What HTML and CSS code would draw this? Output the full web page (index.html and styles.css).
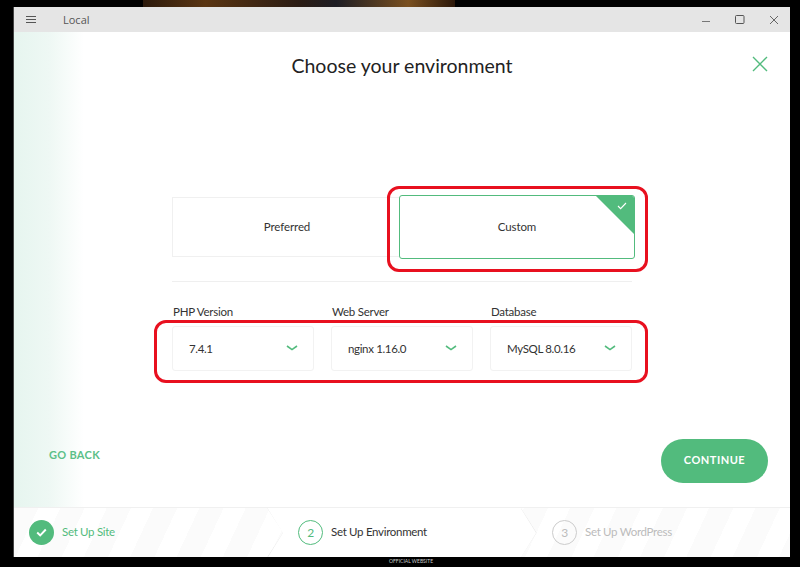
FILE: index.html
```html
<!DOCTYPE html>
<html lang="en">
<head>
<meta charset="utf-8">
<title>Local</title>
<link rel="stylesheet" href="styles.css">
</head>
<body>
<div class="photo-strip"></div>
<div class="window">
  <header class="titlebar">
    <div class="titlebar-left">
      <svg class="hamburger" width="10" height="8" viewBox="0 0 10 8"><path d="M0 .5h10M0 3.5h10M0 6.5h10" stroke="#555" fill="none"/></svg>
      <span class="app-name">Local</span>
    </div>
    <div class="win-controls">
      <svg width="10" height="10" viewBox="0 0 10 10"><path d="M1 6.5h8" stroke="#777" fill="none"/></svg>
      <svg width="10" height="10" viewBox="0 0 10 10"><rect x=".5" y=".5" width="8.5" height="8" rx="1" stroke="#555" fill="none"/></svg>
      <svg width="10" height="10" viewBox="0 0 10 10"><path d="M1 1l8 8M9 1l-8 8" stroke="#666" fill="none"/></svg>
    </div>
  </header>
  <main class="main">
    <div class="heading">
      <span></span>
      <h1 class="title">Choose your environment</h1>
      <svg class="close" width="16" height="16" viewBox="0 0 16 16"><path d="M1 1l14 14M15 1L1 15" stroke="#52bb7d" stroke-width="1.4" fill="none"/></svg>
    </div>
    <div class="panel">
      <div class="choices">
        <div class="choice">Preferred</div>
        <div class="choice choice-active">Custom
          <span class="corner"></span>
          <svg class="corner-check" width="10" height="8" viewBox="0 0 10 8"><path d="M1 4l2.6 2.6L9 1" stroke="#fff" stroke-width="1.1" fill="none"/></svg>
        </div>
      </div>
      <div class="divider"></div>
      <div class="fields">
        <div class="field">
          <div class="field-label">PHP Version</div>
          <div class="select">7.4.1<svg width="12" height="6" viewBox="0 0 12 6"><path d="M1 1l5 3.6L11 1" stroke="#52bb7d" stroke-width="1.6" fill="none"/></svg></div>
        </div>
        <div class="field">
          <div class="field-label">Web Server</div>
          <div class="select">nginx 1.16.0<svg width="12" height="6" viewBox="0 0 12 6"><path d="M1 1l5 3.6L11 1" stroke="#52bb7d" stroke-width="1.6" fill="none"/></svg></div>
        </div>
        <div class="field">
          <div class="field-label">Database</div>
          <div class="select">MySQL 8.0.16<svg width="12" height="6" viewBox="0 0 12 6"><path d="M1 1l5 3.6L11 1" stroke="#52bb7d" stroke-width="1.6" fill="none"/></svg></div>
        </div>
      </div>
    </div>
    <div class="actions">
      <span class="go-back">GO BACK</span>
      <span class="continue">CONTINUE</span>
    </div>
  </main>
  <footer class="steps">
    <div class="step step-done">
      <span class="dot dot-done"><svg width="11" height="9" viewBox="0 0 11 9"><path d="M1.2 4.5l3 3L9.8 1.5" stroke="#fff" stroke-width="1.9" fill="none"/></svg></span>
      <span>Set Up Site</span>
    </div>
    <div class="step step-current">
      <svg class="chevron chevron-left" width="16" height="50" viewBox="0 0 16 50"><path d="M0 0l15.5 25L0 50" stroke="#eee" fill="none"/></svg>
      <span class="dot dot-current">2</span>
      <span>Set Up Environment</span>
      <svg class="chevron chevron-right" width="16" height="50" viewBox="0 0 16 50"><path d="M0 0l15.5 25L0 50" stroke="#eee" fill="none"/></svg>
    </div>
    <div class="step step-next">
      <span class="dot dot-next">3</span>
      <span>Set Up WordPress</span>
    </div>
  </footer>
  <div class="callout callout-custom"></div>
  <div class="callout callout-fields"></div>
</div>
<div class="official">OFFICIAL WEBSITE</div>
</body>
</html>
```

FILE: styles.css
```css
* { box-sizing: border-box; }
html, body { margin: 0; height: 100%; }
body {
  background: #000;
  font-family: Lato, "Open Sans", sans-serif;
  color: #333;
  overflow: hidden;
}
.photo-strip {
  height: 7px;
  width: 312px;
  margin-left: 143px;
  background: linear-gradient(90deg, #2c1a0c, #5a3512 20%, #2b1c14 50%, #1d1d24 62%, #7a5020 85%, #2a1608);
}
.window {
  position: relative;
  width: 776px;
  height: 550px;
  margin-left: 14px;
  display: flex;
  flex-direction: column;
  background: #fff;
  box-shadow: -1px 0 0 #444;
}
.titlebar {
  flex: none;
  height: 25px;
  background: #e5e5e5;
  display: flex;
  align-items: center;
  justify-content: space-between;
}
.titlebar-left { display: flex; align-items: center; padding-left: 12px; }
.hamburger { margin-right: 27px; }
.app-name { font: 11px "Open Sans", sans-serif; color: #555; }
.win-controls { display: flex; gap: 24px; padding-right: 11px; }
.main {
  flex: 1;
  display: flex;
  flex-direction: column;
  background: linear-gradient(90deg, #e6f5ef, #eef8f4 35px, #fff 70px);
}
.heading {
  display: grid;
  grid-template-columns: 1fr auto 1fr;
  align-items: start;
  padding: 20px 22px 0;
}
.title {
  margin: 0;
  font-family: Lato, sans-serif;
  font-size: 19.5px;
  font-weight: 400;
  line-height: 28px;
  color: #222;
}
.close { justify-self: end; margin-top: 4px; }
.panel { width: 460px; margin: 115px 0 0 158px; }
.choices { display: flex; align-items: center; height: 64px; }
.choice {
  width: 230px;
  height: 60px;
  flex: none;
  display: flex;
  align-items: center;
  justify-content: center;
  padding-bottom: 1px;
  border: 1px solid #f0f0f0;
  font-size: 11.5px;
  letter-spacing: -.1px;
  color: #333;
  background: #fff;
}
.choice-active {
  position: relative;
  width: 236px;
  height: 64px;
  margin-left: -3px;
  border: 1px solid #52bb7d;
  border-radius: 3px;
  overflow: hidden;
}
.corner {
  position: absolute;
  top: 0;
  right: 0;
  border-style: solid;
  border-width: 0 38px 38px 0;
  border-color: transparent #52bb7d transparent transparent;
}
.corner-check { position: absolute; top: 6px; right: 7px; }
.divider { height: 1px; background: #efefef; margin-top: 22px; }
.fields { display: flex; gap: 17px; margin-top: 22px; }
.field { width: 142px; flex: none; }
.field-label { font-size: 11.5px; letter-spacing: -.25px; line-height: 15px; color: #333; padding-left: 1px; margin-bottom: 7px; }
.select {
  height: 45px;
  display: flex;
  align-items: center;
  justify-content: space-between;
  padding: 0 15px 1px 16px;
  border: 1px solid #f2f2f2;
  border-radius: 3px;
  font-size: 11.5px;
  letter-spacing: -.35px;
  color: #333;
}
.actions {
  margin-top: auto;
  display: flex;
  align-items: center;
  justify-content: space-between;
  padding: 0 22px 24px 35px;
}
.go-back {
  position: relative;
  top: -7px;
  font-size: 11px;
  font-weight: 700;
  letter-spacing: .3px;
  color: #5cc088;
}
.continue {
  width: 107px;
  height: 44px;
  padding-bottom: 3px;
  border-radius: 22px;
  background: #52bb7d;
  color: #fff;
  font-size: 11px;
  font-weight: 700;
  letter-spacing: .5px;
  display: flex;
  align-items: center;
  justify-content: center;
}
.steps {
  flex: none;
  height: 50px;
  display: flex;
  border-top: 1px solid #f0f0f0;
  background: repeating-linear-gradient(115deg, #fbfbfb 0 22px, #fff 22px 42px);
  font-size: 11.5px;
  letter-spacing: -.3px;
}
.step { display: flex; align-items: center; gap: 8px; position: relative; padding-bottom: 2px; }
.step .dot { margin-top: 2px; }
.step-done { width: 253px; padding-left: 15px; color: #52bb7d; }
.step-current {
  width: 270px;
  padding-left: 31px;
  color: #333;
  background: #fff;
  clip-path: polygon(0 0, calc(100% - 16px) 0, 100% 50%, calc(100% - 16px) 100%, 0 100%, 16px 50%);
}
.step-next { flex: 1; padding-left: 15px; color: #bbb; }
.chevron { position: absolute; top: 0; }
.chevron-left { left: 0; }
.chevron-right { right: 0; }
.dot {
  width: 25px;
  height: 25px;
  border-radius: 50%;
  flex: none;
  display: flex;
  align-items: center;
  justify-content: center;
  font-size: 12px;
}
.dot-done { background: #52bb7d; }
.dot-current { border: 1.5px solid #52bb7d; color: #52bb7d; }
.dot-next { border: 1.5px solid #ccc; color: #bbb; }
.callout {
  position: absolute;
  border: 3px solid #e8101f;
  border-radius: 12px;
  pointer-events: none;
}
.callout-custom { left: 373px; top: 179px; width: 261px; height: 86px; }
.callout-fields { left: 140px; top: 313px; width: 494px; height: 63px; }
.official {
  margin-left: 389px;
  font-size: 5px;
  line-height: 8px;
  color: #ccc;
}
```
